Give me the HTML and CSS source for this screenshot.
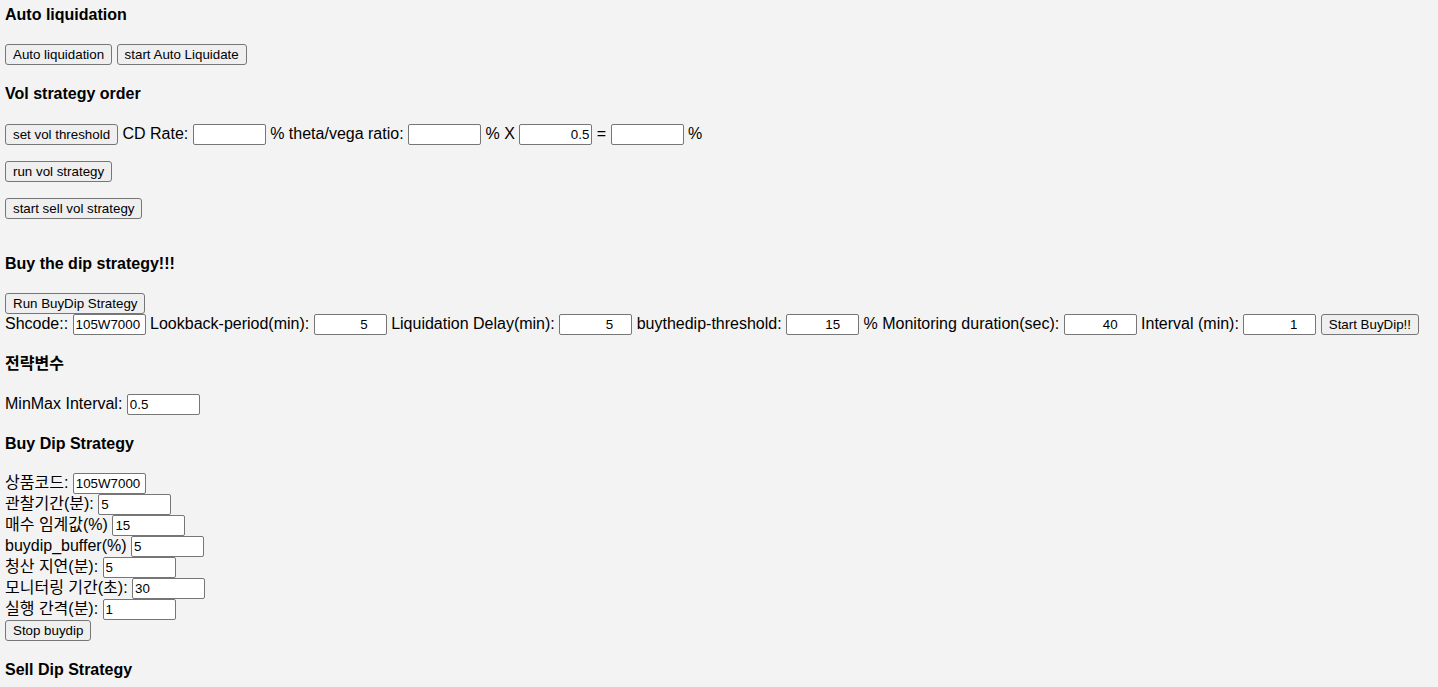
FILE: index.html
```html
<!DOCTYPE html>
<html lang="ko">
<head>
    <meta charset="UTF-8">
    <title>Trading Control</title>
    <link rel="stylesheet" href="styles.css">
</head>
<body>
    <h4 class="first">Auto liquidation</h4>
    <p>
        <button>Auto liquidation</button>
        <button>start Auto Liquidate</button>
    </p>

    <h4>Vol strategy order</h4>
    <p>
        <button>set vol threshold</button>
        CD Rate: <input type="text" class="field"> %
        theta/vega ratio: <input type="text" class="field"> %
        X <input type="text" class="field right" value="0.5"> =
        <input type="text" class="field"> %
    </p>
    <p><button>run vol strategy</button></p>
    <p class="last"><button>start sell vol strategy</button></p>

    <h4>Buy the dip strategy!!!</h4>
    <div>
        <button>Run BuyDip Strategy</button><br>
        Shcode:: <input type="text" class="field" value="105W7000">
        Lookback-period(min): <input type="number" class="field num" value="5">
        Liquidation Delay(min): <input type="number" class="field num" value="5">
        buythedip-threshold: <input type="number" class="field num" value="15"> %
        Monitoring duration(sec): <input type="number" class="field num" value="40">
        Interval (min): <input type="number" class="field num" value="1">
        <button>Start BuyDip!!</button>
    </div>

    <h4>전략변수</h4>
    <p>MinMax Interval: <input type="text" class="field" value="0.5"></p>

    <h4>Buy Dip Strategy</h4>
    <div class="params">
        <label>상품코드:</label> <input type="text" class="field" value="105W7000"><br>
        <label>관찰기간(분):</label> <input type="text" class="field" value="5"><br>
        <label>매수 임계값(%)</label> <input type="text" class="field" value="15"><br>
        <label>buydip_buffer(%)</label> <input type="text" class="field" value="5"><br>
        <label>청산 지연(분):</label> <input type="text" class="field" value="5"><br>
        <label>모니터링 기간(초):</label> <input type="text" class="field" value="30"><br>
        <label>실행 간격(분):</label> <input type="text" class="field" value="1"><br>
        <button>Stop buydip</button>
    </div>

    <h4>Sell Dip Strategy</h4>
</body>
</html>
```

FILE: styles.css
```css
body {
    margin: 6px 5px 5px;
    background-color: #f3f3f3;
    color: #000;
    font-family: "Liberation Sans", Arial, "Noto Sans CJK KR", sans-serif;
    font-size: 16px;
    line-height: 1.15;
}

h4 {
    font-size: 16px;
    font-weight: bold;
    margin: 20px 0;
}

h4.first {
    margin-top: 0;
}

p {
    margin: 16px 0;
}

p.last {
    margin-bottom: 36px;
}

button {
    height: 21px;
    box-sizing: border-box;
    font-family: "Liberation Sans", Arial, sans-serif;
    font-size: 13.33px;
    padding: 1px 7px;
    background-color: #efefef;
    border: 1px solid #767676;
    border-radius: 3px;
    color: #000;
}

.field {
    width: 73px;
    height: 21px;
    box-sizing: border-box;
    font-family: "Liberation Sans", Arial, sans-serif;
    font-size: 13.33px;
    padding: 1px 2px;
    background-color: #fff;
    border: 1px solid #767676;
    border-radius: 2px;
    color: #000;
}

.right {
    text-align: right;
}

.num {
    text-align: right;
    padding-right: 18px;
}

.num::-webkit-inner-spin-button {
    display: none;
}
```
